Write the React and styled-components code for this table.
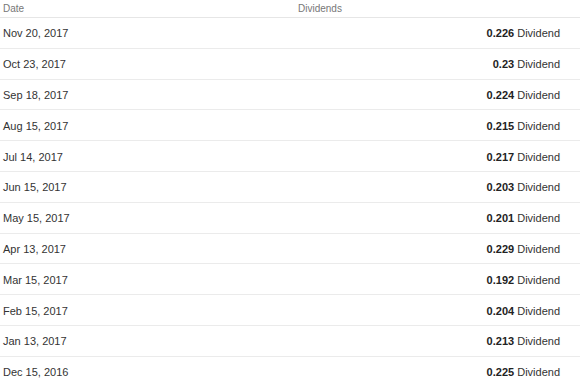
import React from 'react'
import styled, { createGlobalStyle } from 'styled-components'

const GlobalStyle = createGlobalStyle`
    body {
        margin: 0;
        background: #fff;
        font-family: "Liberation Sans", Arial, sans-serif;
    }
`

const Table = styled.table`
    width: 580px;
    border-collapse: collapse;
    table-layout: fixed;
`

const HeadCell = styled.th`
    height: 17px;
    padding: 0 3px;
    font-size: 10px;
    font-weight: 400;
    color: #777;
    text-align: left;
    vertical-align: middle;
    border-bottom: 1px solid #e6e6e6;
    width: ${props => props.$width || 'auto'};
`

const Row = styled.tr`
    border-bottom: 1px solid #ebebeb;
    &:last-child {
        border-bottom: none;
    }
`

const Cell = styled.td`
    height: 28.8px;
    padding: 1px ${props => (props.$right ? '20px' : '3px')} 0 3px;
    font-size: 11px;
    color: #333;
    text-align: ${props => (props.$right ? 'right' : 'left')};
    vertical-align: middle;
`

const Amount = styled.b`
    color: #222;
    font-weight: 700;
`

const dividends = [
    ['Nov 20, 2017', '0.226'],
    ['Oct 23, 2017', '0.23'],
    ['Sep 18, 2017', '0.224'],
    ['Aug 15, 2017', '0.215'],
    ['Jul 14, 2017', '0.217'],
    ['Jun 15, 2017', '0.203'],
    ['May 15, 2017', '0.201'],
    ['Apr 13, 2017', '0.229'],
    ['Mar 15, 2017', '0.192'],
    ['Feb 15, 2017', '0.204'],
    ['Jan 13, 2017', '0.213'],
    ['Dec 15, 2016', '0.225'],
]

const App = () => {
    return (
        <>
            <GlobalStyle />
            <Table>
                <thead>
                    <tr>
                        <HeadCell $width="289px">Date</HeadCell>
                        <HeadCell>Dividends</HeadCell>
                    </tr>
                </thead>
                <tbody>
                    {dividends.map(([date, amount]) => (
                        <Row key={date}>
                            <Cell>{date}</Cell>
                            <Cell $right>
                                <Amount>{amount}</Amount> Dividend
                            </Cell>
                        </Row>
                    ))}
                </tbody>
            </Table>
        </>
    )
}

export default App
